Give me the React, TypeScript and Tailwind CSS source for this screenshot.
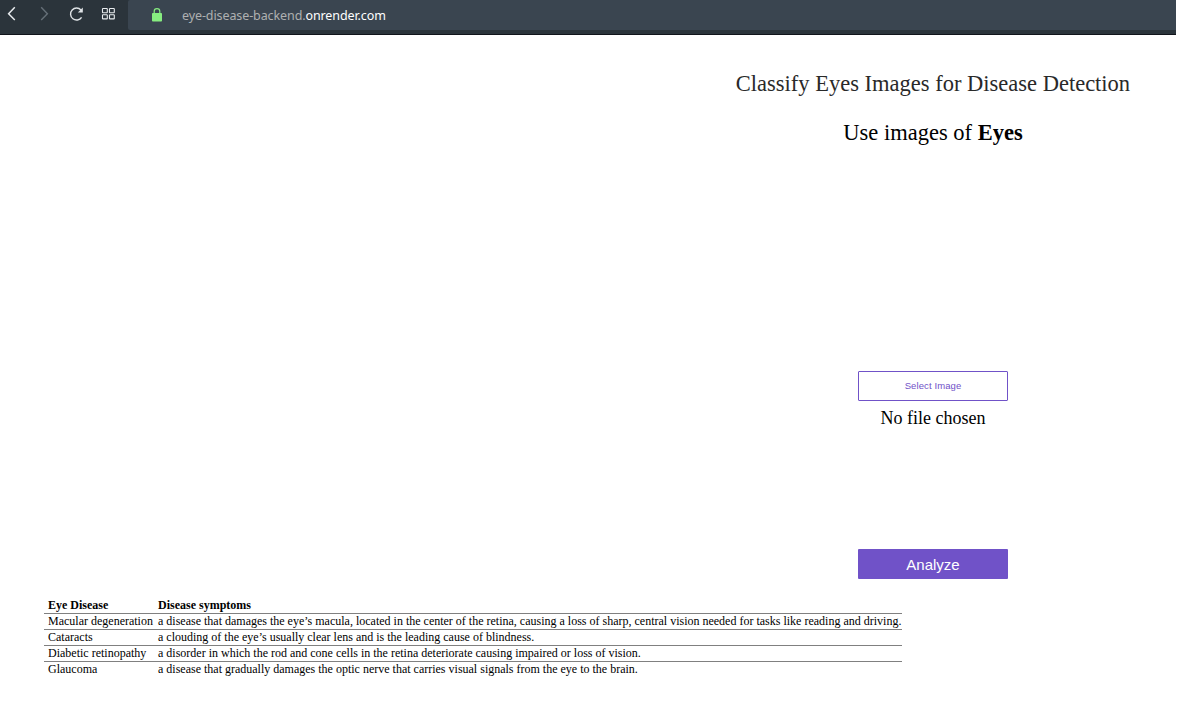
import type { ReactNode } from "react";

const diseases = [
  ["Macular degeneration", "a disease that damages the eye’s macula, located in the center of the retina, causing a loss of sharp, central vision needed for tasks like reading and driving."],
  ["Cataracts", "a clouding of the eye’s usually clear lens and is the leading cause of blindness."],
  ["Diabetic retinopathy", "a disorder in which the rod and cone cells in the retina deteriorate causing impaired or loss of vision."],
  ["Glaucoma", "a disease that gradually damages the optic nerve that carries visual signals from the eye to the brain."],
];

function NavButton({ label, children }: { label: string; children: ReactNode }) {
  return (
    <button aria-label={label} className="flex h-[28px] w-[32px] shrink-0 items-center justify-center">
      {children}
    </button>
  );
}

function BrowserBar() {
  return (
    <header className="flex h-[35px] w-[1176px] border-b border-[#11141b] bg-[#2b343b] font-['Noto_Sans',sans-serif]">
      <nav className="-ml-[4px] flex w-[132px] shrink-0">
        <NavButton label="Back">
          <svg width="16" height="16" viewBox="0 0 16 16" fill="none" stroke="#e8ebee" strokeWidth="1.5"><path d="M10.8 1.3 4.6 7.7l6.2 6.4" /></svg>
        </NavButton>
        <NavButton label="Forward">
          <svg width="16" height="16" viewBox="0 0 16 16" fill="none" stroke="#667078" strokeWidth="1.4"><path d="m5.2 1.3 6.2 6.4-6.2 6.4" /></svg>
        </NavButton>
        <NavButton label="Reload">
          <svg width="16" height="16" viewBox="0 0 16 16" fill="none" stroke="#dfe3e6" strokeWidth="1.4"><path d="M13.6 11.3A6 6 0 1 1 13 4" /><path d="M14.8 1.5v5h-5z" fill="#dfe3e6" stroke="none" /></svg>
        </NavButton>
        <NavButton label="Start page">
          <svg width="16" height="16" viewBox="0 0 16 16" fill="none" stroke="#e8ebee" strokeWidth="1.1"><rect x="2.5" y="2.5" width="4.8" height="4.2" rx=".5" /><rect x="9.5" y="2.5" width="4.8" height="4.2" rx=".5" /><rect x="2.5" y="8.7" width="4.8" height="4.2" rx=".5" /><rect x="9.5" y="8.7" width="4.8" height="4.2" rx=".5" /></svg>
        </NavButton>
      </nav>
      <div className="flex h-[30px] grow items-center rounded-l-[2px] bg-[#3a4550] pl-[24px]">
        <svg width="10" height="14" viewBox="0 0 10 14" fill="none"><path d="M2.2 6V3.3a2.8 2.7 0 0 1 5.6 0V6" stroke="#87ed80" strokeWidth="1.2" /><rect y="5" width="10" height="8.5" rx=".8" fill="#87ed80" /></svg>
        <span className="ml-[20px] whitespace-nowrap pt-[2px] text-[12.5px] leading-[28px] tracking-[-0.1px] text-[#aeb0b1]">eye-disease-backend.<span className="text-white">onrender.com</span></span>
      </div>
    </header>
  );
}

export default function App() {
  return (
    <div className="h-[708px] w-[1177px] overflow-hidden bg-white font-['Liberation_Serif',serif] text-black">
      <BrowserBar />
      <main>
        <section className="ml-[689px] flex h-[545px] w-[488px] flex-col items-center pt-[35px]">
          <h1 className="h-[28px] whitespace-nowrap text-[22.5px] leading-[28px] text-[#292929]">Classify Eyes Images for Disease Detection</h1>
          <p className="mt-[21px] h-[28px] whitespace-nowrap text-[22.5px] leading-[28px]">Use images of <b>Eyes</b></p>
          <button className="mt-[224px] h-[30px] w-[150px] shrink-0 rounded-[1px] border border-[#7052c8] bg-white font-['Liberation_Sans',sans-serif] text-[9.5px] leading-[28px] tracking-[0.1px] text-[#7052c8]">Select Image</button>
          <p className="mt-[5px] h-[24px] text-[18px] leading-[24px]">No file chosen</p>
          <button className="mt-[119px] h-[30px] w-[150px] shrink-0 rounded-[1px] bg-[#7052c8] pt-[2px] font-['Liberation_Sans',sans-serif] text-[15px] leading-[28px] text-white">Analyze</button>
        </section>
        <table className="ml-[44px] mt-[17px] w-[858px] table-fixed border-collapse text-left text-[12px] leading-[15px]">
          <colgroup><col className="w-[110px]" /><col /></colgroup>
          <thead>
            <tr className="h-[16px] border-b border-[#808080]"><th className="p-0 pl-[4px] pt-px leading-[14px]">Eye Disease</th><th className="p-0 pl-[4px] pt-px leading-[14px]">Disease symptoms</th></tr>
          </thead>
          <tbody>
            {diseases.map(([name, symptoms]) => (
              <tr key={name} className="h-[16px] border-b border-[#808080] last:border-b-0"><td className="whitespace-nowrap p-0 pl-[4px]">{name}</td><td className="whitespace-nowrap p-0 pl-[4px]">{symptoms}</td></tr>
            ))}
          </tbody>
        </table>
      </main>
    </div>
  );
}
